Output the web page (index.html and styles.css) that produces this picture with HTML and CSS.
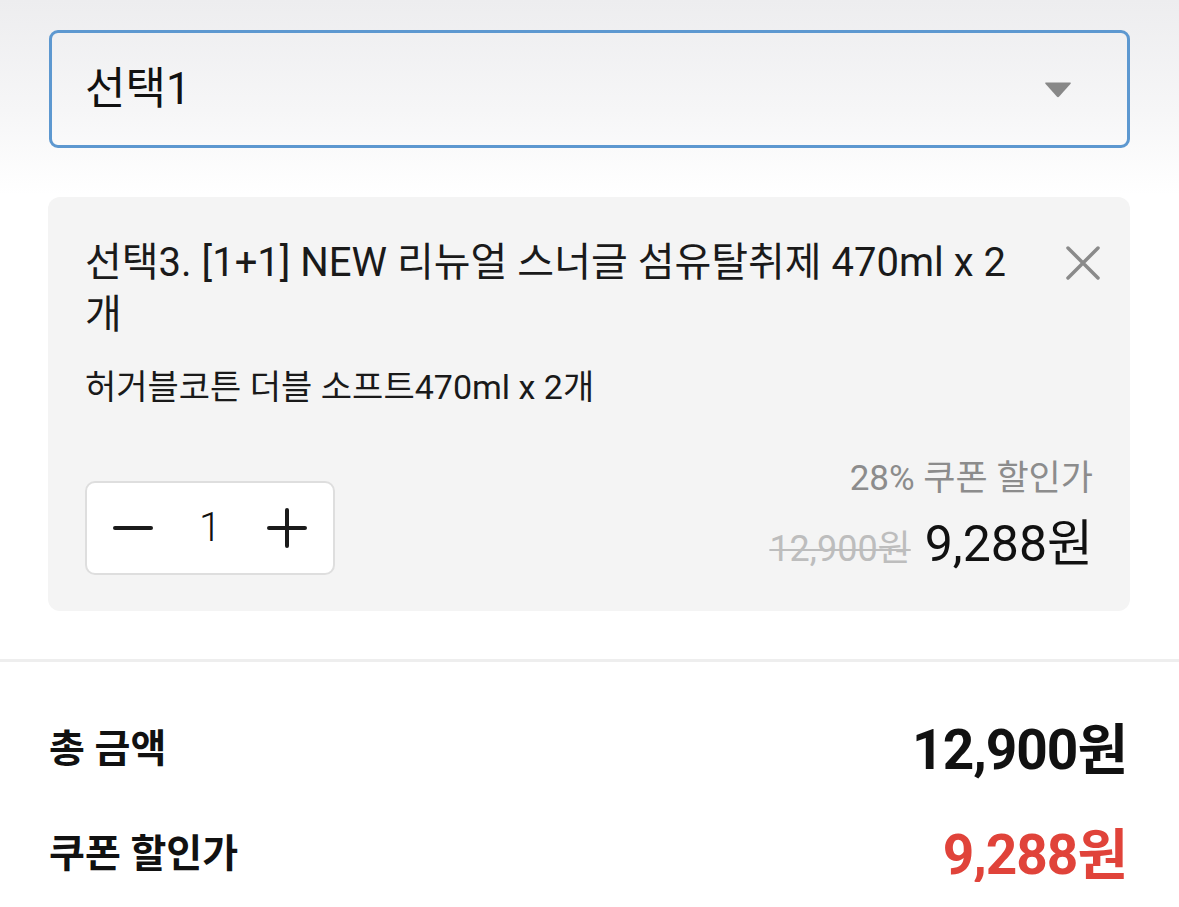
FILE: index.html
```html
<!DOCTYPE html>
<html lang="ko">
<head>
  <meta charset="UTF-8" />
  <meta name="viewport" content="width=device-width, initial-scale=1.0"/>
  <title>옵션 선택</title>
  <link rel="stylesheet" href="styles.css">
</head>
<body>

<!-- 옵션 선택 -->
<div class="topArea">
  <div class="selectBox">
    <span class="selectText">선택1</span>
    <svg class="selectArrow" width="28" height="17" viewBox="0 0 28 17">
      <path d="M2 1.5 H26 Q27.5 1.5 26.6 2.8 L15.2 15.6 Q14 16.8 12.8 15.6 L1.4 2.8 Q0.5 1.5 2 1.5 Z" fill="#888"/>
    </svg>
  </div>
</div>

<div class="content">
  <!-- 선택된 옵션 -->
  <div class="optionCard">
    <div class="cardHead">
      <p class="optionTitle">선택3. [1+1] NEW 리뉴얼 스너글 섬유탈취제 470ml x 2개</p>
      <button class="removeBtn">
        <svg width="34" height="34" viewBox="0 0 34 34">
          <path d="M2 2 L32 32 M32 2 L2 32" stroke="#8a8a8a" stroke-width="3.5" stroke-linecap="round"/>
        </svg>
      </button>
    </div>
    <p class="optionSub">허거블코튼 더블 소프트470ml x 2개</p>

    <div class="cardFoot">
      <div class="stepper">
        <button class="stepBtn">
          <svg width="40" height="40" viewBox="0 0 40 40">
            <path d="M2 20 H38" stroke="#1a1a1a" stroke-width="4" stroke-linecap="round"/>
          </svg>
        </button>
        <span class="qty">1</span>
        <button class="stepBtn">
          <svg width="40" height="40" viewBox="0 0 40 40">
            <path d="M2 20 H38 M20 2 V38" stroke="#1a1a1a" stroke-width="4" stroke-linecap="round"/>
          </svg>
        </button>
      </div>

      <div class="priceBox">
        <div class="couponLabel">28% 쿠폰 할인가</div>
        <div class="priceLine">
          <del class="oldPrice">12,900원</del>
          <span class="newPrice">9,288원</span>
        </div>
      </div>
    </div>
  </div>
</div>

<div class="divider"></div>

<!-- 합계 -->
<div class="summary">
  <div class="sumRow">
    <span class="sumLabel">총 금액</span>
    <span class="sumValue">12,900원</span>
  </div>
  <div class="sumRow">
    <span class="sumLabel">쿠폰 할인가</span>
    <span class="sumValue red">9,288원</span>
  </div>
</div>

</body>
</html>
```

FILE: styles.css
```css
* { box-sizing: border-box; }

body {
  margin: 0;
  font-family: Roboto, "Noto Sans CJK KR", sans-serif;
  background: #fff linear-gradient(to bottom, #ededef 0px, #f6f6f7 110px, #fff 195px) no-repeat;
  background-size: 100% 195px;
  color: #111;
}

p {
  margin: 0;
}

button {
  border: none;
  background: none;
  padding: 0;
  cursor: pointer;
}

.topArea {
  padding: 30px 49px 0;
}

.selectBox {
  height: 118px;
  border: 3px solid #5d98d0;
  border-radius: 9px;
  display: flex;
  align-items: center;
  justify-content: space-between;
  padding: 0 55px 0 33px;
}

.selectText {
  font-size: 44px;
  line-height: 52px;
  color: #111;
}

.selectArrow {
  display: block;
}

.content {
  padding: 49px 49px 0 48px;
}

.optionCard {
  background: #f4f4f4;
  border-radius: 12px;
  padding: 40px 37px 32px 37px;
}

.cardHead {
  display: flex;
  align-items: flex-start;
  gap: 40px;
}

.optionTitle {
  flex: 1;
  font-size: 40px;
  line-height: 52px;
  color: #1a1a1a;
}

.removeBtn {
  width: 34px;
  height: 52px;
  margin-right: -7px;
  display: flex;
  align-items: center;
  justify-content: center;
}

.optionSub {
  margin-top: 24px;
  font-size: 34px;
  line-height: 44px;
  color: #1a1a1a;
}

.cardFoot {
  margin-top: 48px;
  display: flex;
  justify-content: space-between;
  align-items: flex-end;
}

.stepper {
  width: 250px;
  height: 94px;
  background: #fff;
  border: 2px solid #dedede;
  border-radius: 10px;
  display: flex;
  align-items: center;
  justify-content: space-between;
  padding: 0 24px 0 24px;
  margin-bottom: 4px;
}

.stepBtn {
  width: 44px;
  height: 44px;
  display: flex;
  align-items: center;
  justify-content: center;
}

.qty {
  font-size: 40px;
  font-weight: 300;
  line-height: 44px;
}

.priceBox {
  text-align: right;
}

.couponLabel {
  font-size: 35px;
  line-height: 44px;
  color: #8c8c8c;
}

.priceLine {
  margin-top: 13px;
  display: flex;
  align-items: baseline;
  justify-content: flex-end;
  gap: 14px;
  line-height: 60px;
}

.oldPrice {
  font-size: 36px;
  color: #bdbdbd;
  text-decoration-thickness: 2px;
}

.newPrice {
  font-size: 50px;
  color: #111;
}

.divider {
  margin-top: 48px;
  height: 3px;
  background: #eeeeee;
}

.summary {
  padding: 51px 52px 0 49px;
  display: flex;
  flex-direction: column;
  gap: 41px;
}

.sumRow {
  height: 64px;
  display: flex;
  align-items: center;
  justify-content: space-between;
}

.sumLabel {
  font-size: 39px;
  font-weight: 700;
  color: #111;
}

.sumValue {
  font-size: 55px;
  font-weight: 700;
  letter-spacing: -1px;
  color: #111;
}

.sumValue.red {
  color: #e0433a;
}
```
